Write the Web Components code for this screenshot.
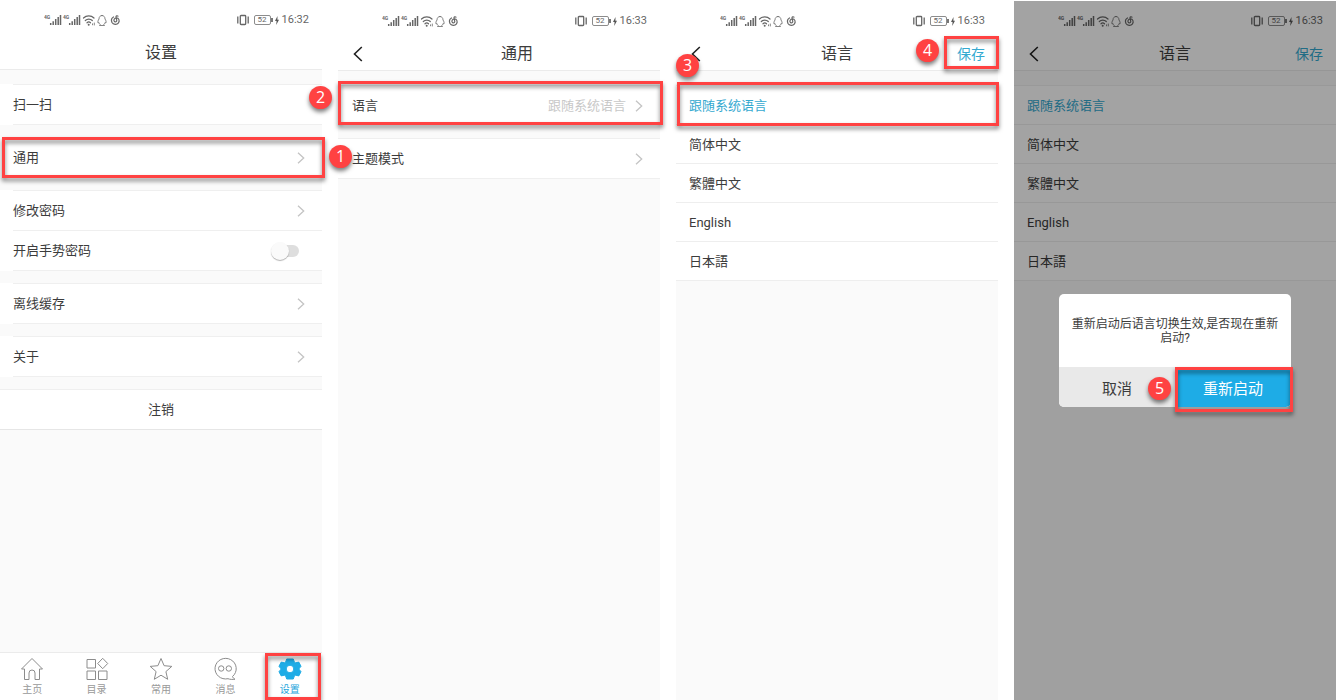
<!DOCTYPE html>
<html lang="zh-CN">
<head>
<meta charset="utf-8">
<title>语言设置步骤</title>
<style>
  body {
    margin: 0;
    background: #fff;
    color: #3c3c3c;
    font: 13px/20px Roboto, "Noto Sans CJK SC", sans-serif;
  }
</style>
</head>
<body>
<guide-board>
  <phone-screen>
    <status-bar slot="top">16:32</status-bar>
    <title-bar slot="top">设置</title-bar>
    <row-group inset><list-row>扫一扫</list-row></row-group>
    <row-group inset>
      <list-row arrow>通用</list-row>
      <mark-frame style="--inset: 0 -3px 0 2px"></mark-frame>
      <step-badge style="--x: 329px; --y: 8px">1</step-badge>
    </row-group>
    <row-group inset>
      <list-row arrow>修改密码</list-row>
      <switch-row>开启手势密码</switch-row>
    </row-group>
    <row-group inset><list-row arrow>离线缓存</list-row></row-group>
    <row-group inset><list-row arrow>关于</list-row></row-group>
    <row-group><list-row centered>注销</list-row></row-group>
    <tab-bar slot="bottom">
      <tab-item icon="home">主页</tab-item>
      <tab-item icon="grid">目录</tab-item>
      <tab-item icon="star">常用</tab-item>
      <tab-item icon="chat">消息</tab-item>
      <tab-item icon="gear" active>设置<mark-frame slot="mark" style="--inset: 0 1px 0 7px"></mark-frame></tab-item>
    </tab-bar>
  </phone-screen>

  <phone-screen lowered>
    <status-bar slot="top">16:33</status-bar>
    <title-bar slot="top" back>通用</title-bar>
    <row-group>
      <list-row arrow>语言<span slot="value">跟随系统语言</span></list-row>
      <mark-frame style="--inset: -4px -3px 1px 0"></mark-frame>
      <step-badge style="--x: -29px; --y: 1px">2</step-badge>
    </row-group>
    <row-group><list-row arrow>主题模式</list-row></row-group>
  </phone-screen>

  <phone-screen lowered>
    <status-bar slot="top">16:33</status-bar>
    <title-bar slot="top" back action="保存">语言
      <mark-frame slot="mark" style="--inset: -1px -1px 1px auto; --width: 55px"></mark-frame>
      <step-badge slot="mark" style="--x: 240px; --y: 2px">4</step-badge>
      <step-badge slot="mark" style="--x: 0px; --y: 17px">3</step-badge>
    </title-bar>
    <language-list>
      <mark-frame style="--inset: -4px -1px auto 1px; --height: 44px"></mark-frame>
    </language-list>
  </phone-screen>

  <phone-screen lowered>
    <status-bar slot="top">16:33</status-bar>
    <title-bar slot="top" back action="保存">语言</title-bar>
    <language-list></language-list>
    <confirm-dialog slot="overlay" cancel="取消" accept="重新启动">重新启动后语言切换生效,是否现在重新启动?
      <mark-frame slot="mark" style="--inset: 0 -2px -5px 0"></mark-frame>
      <step-badge slot="mark" style="--x: -27px; --y: 10px">5</step-badge>
    </confirm-dialog>
  </phone-screen>
</guide-board>

<script>
const chevron = '<svg class="chev" width="8" height="12" viewBox="0 0 8 12" fill="none" stroke="#c4c4c4" stroke-width="1.3" aria-hidden="true"><path d="M1 .7 6.7 6 1 11.3"/></svg>';

function define(name, render) {
  customElements.define(name, class extends HTMLElement {
    constructor() {
      super();
      this.attachShadow({ mode: 'open' });
    }
    connectedCallback() {
      const t = document.createElement('template');
      t.innerHTML = '<style>*{box-sizing:border-box}button,a,input{font:inherit;color:inherit}</style>' + render(this);
      this.shadowRoot.replaceChildren(t.content.cloneNode(true));
    }
  });
}

define('guide-board', () => `
  <style>
    :host { display: grid; grid-template-columns: repeat(4, minmax(0, 1fr)); gap: 16px; min-height: 100vh; }
  </style>
  <slot></slot>`);

define('phone-screen', () => `
  <style>
    :host { display: flex; flex-direction: column; position: relative; background: #fafafa; }
    :host([lowered]) { margin-top: 1px; }
    header { background: #fff; border-bottom: 1px solid #ebebeb; }
    main { flex: 1; display: flex; flex-direction: column; gap: 12px; padding-top: 14px; }
  </style>
  <header><slot name="top"></slot></header>
  <main><slot></slot></main>
  <slot name="bottom"></slot>
  <slot name="overlay"></slot>`);

const signal = x => `<g transform="translate(${x})"><text x="0" y="4.500" font-size="5" font-weight="700" font-family="Roboto, sans-serif">4G</text>
  <path d="M6.700 11v-2M9.200 11V7.200M11.700 11V5M14.200 11V3M16.500 11V1" stroke="#666" stroke-width="1.500"/></g>`;

define('status-bar', () => `
  <style>
    :host { display: flex; justify-content: space-between; align-items: center; height: 36px; padding: 4px 13px 0 44px; box-sizing: border-box; color: #666; font-size: 11px; }
    div { display: flex; align-items: center; gap: 2px; }
    .level { display: inline-block; border: 1px solid #8c8c8c; border-radius: 2px; width: 17px; height: 10px; font-size: 8px; line-height: 8px; text-align: center; }
    .cell { display: flex; align-items: center; margin-left: 2px; }
    .cell::after { content: ""; width: 2px; height: 4px; background: #777; }
    time { margin-left: 1px; }
  </style>
  <svg width="78" height="13" viewBox="0 0 78 13" fill="#666" aria-hidden="true">
    ${signal(0)}${signal(19)}
    <g fill="none" stroke="#666" stroke-width="1.2" stroke-linecap="round">
      <path d="M39.500 4a7.500 7.500 0 0 1 10.500 0M41.300 6.500a5 5 0 0 1 7 0M43 8.800a2.500 2.500 0 0 1 3.500 0"/>
      <path d="M48.500 9.800v1M50.300 9v2" stroke-width=".8"/>
      <path d="M58 1.500c-2 0-3 1.500-3 3.500C54 6.500 53.500 8 54.200 9L55 8.500c.2.9.6 1.500 1.200 2l-.7 1h5l-.7-1c.6-.5 1-1.100 1.200-2l.8.5c.7-1 .2-2.500-.8-4C61 3 60 1.500 58 1.500Z" stroke-width=".8"/>
      <path d="M69.500 3C67.700 4 67 6.200 68 8.400c1.200 2.400 5 2.500 6.500.4 1.400-2 .4-4.800-2-4.900-2.300 0-3.300 2.600-2 3.700 1.400 1 2.600-.3 2.200-1.600l-.7-3c-.2-1 1.200-1.600 2-.8" stroke-width="1.200"/>
    </g>
    <circle cx="44.700" cy="10.800" r="1"/>
  </svg>
  <div>
    <svg width="14" height="12" viewBox="0 0 14 12" fill="none" stroke="#666" stroke-width="1.300" aria-hidden="true"><rect x="4.300" y="1.500" width="5.400" height="9" rx=".8"/><path d="M1.800 2.500v7M12.200 2.500v7"/></svg>
    <span class="cell"><span class="level">52</span></span>
    <svg width="4" height="9" viewBox="0 0 4 9" fill="#555" aria-hidden="true"><path d="M2.500 0 0 5h1.600L1.200 9 4 3.800H2.400Z"/></svg>
    <time><slot></slot></time>
  </div>`);

/* Without an action the title centres in the space right of the back button. */
define('title-bar', el => `
  <style>
    :host { display: grid; grid-template-columns: 1fr; align-items: center; position: relative; height: 33px; box-sizing: border-box; }
    :host([back]) { grid-template-columns: 36px 1fr; }
    :host([action]) { grid-template-columns: 41px 1fr 41px; }
    h1 { margin: 0; font-size: 16px; line-height: 24px; font-weight: 400; text-align: center; }
    button { border: 0; background: none; padding: 0; white-space: nowrap; }
    .back { padding-left: 15px; display: flex; }
    .action { font-size: 14px; line-height: 20px; color: #34a9d0; text-align: left; }
  </style>
  ${el.hasAttribute('back') ? '<button class="back" aria-label="返回"><svg width="10" height="16" viewBox="0 0 10 16" fill="none" stroke="#222" stroke-width="1.600"><path d="M8.800 1 1.500 8l7.300 7"/></svg></button>' : ''}
  <h1><slot></slot></h1>
  ${el.hasAttribute('action') ? `<button class="action">${el.getAttribute('action')}</button>` : ''}
  <slot name="mark"></slot>`);

define('row-group', () => `
  <style>
    :host { display: block; position: relative; background: #fff; }
    .rows { border-top: 1px solid #efefef; }
    :host([inset]) .rows { margin-left: 13px; }
    :host([inset]) { --row-pad: 0; }
  </style>
  <div class="rows"><slot></slot></div>`);

define('list-row', el => `
  <style>
    :host { display: block; }
    button { display: flex; align-items: center; gap: 9px; width: 100%; height: 40px; border: 0; border-bottom: 1px solid #efefef; background: none; padding: 0 17px 0 var(--row-pad, 14px); text-align: left; }
    .name { flex: 1; }
    ::slotted([slot=value]) { color: #c8c8c8; }
    :host([centered]) .name { text-align: center; }
    :host([centered]) button { padding: 0 13px; border-color: #e6e6e6; }
  </style>
  <button><span class="name"><slot></slot></span><slot name="value"></slot>${el.hasAttribute('arrow') ? chevron : ''}</button>`);

define('switch-row', () => `
  <style>
    :host { display: block; }
    label { display: flex; align-items: center; justify-content: space-between; height: 40px; border-bottom: 1px solid #efefef; padding: 0 23px 0 var(--row-pad, 14px); }
    input { appearance: none; margin: 0; width: 28px; height: 18px; display: grid; align-items: center; }
    input::before, input::after { content: ""; grid-area: 1 / 1; }
    input::before { justify-self: end; width: 20px; height: 12px; border-radius: 6px; background: #dedede; }
    input::after { width: 18px; height: 18px; border-radius: 50%; background: #fafafa; box-shadow: 0 1px 1px rgba(0,0,0,.3); }
  </style>
  <label><slot></slot><input type="checkbox" role="switch"></label>`);

define('language-list', () => {
  const items = [['跟随系统语言', 'zh-CN'], ['简体中文', 'zh-CN'], ['繁體中文', 'zh-TW'], ['English', 'en'], ['日本語', 'ja']];
  return `
  <style>
    :host { display: block; position: relative; background: #fff; border-top: 1px solid #efefef; }
    label { display: flex; align-items: center; height: 39px; padding: 2px 13px 0; border-bottom: 1px solid #eeeeee; }
    input { appearance: none; margin: 0; width: 0; height: 0; }
    label:has(:checked) { color: #34a9d0; }
  </style>
  ${items.map(([text, lang], i) => `<label lang="${lang}"><input type="radio" name="language"${i ? '' : ' checked'}>${text}</label>`).join('')}
  <slot></slot>`;
});

define('tab-bar', () => `
  <style>
    :host { display: block; background: #fff; border-top: 1px solid #ebebeb; }
    nav { display: grid; grid-template-columns: repeat(5, minmax(0, 1fr)); }
  </style>
  <nav><slot></slot></nav>`);

const tabIcons = {
  home: '<path d="M1.500 12 12 1.500 22.500 12h-3v10.500h-4.500V16a3 3 0 0 0-6 0v6.500H4.500V12Z"/>',
  grid: '<path d="M2 2.500h8.500V11H2zM2 14h8.500v8.500H2zM13.500 14H22v8.500h-8.500zM17.700 1.300 22.700 6.500l-5 5.200-5-5.200Z"/>',
  star: '<path d="m12 1.500 3.100 7.200 7.700.7-5.900 5.200 1.800 7.700L12 18.200l-6.700 4.100 1.800-7.700L1.200 9.400l7.700-.7Z"/>',
  chat: '<path d="M19.500 19.500A10.600 10.300 0 1 0 15 21.700c2 .8 4.500.9 7 .5-1.200-.6-2.200-1.500-2.500-2.700Z"/><circle cx="8.200" cy="11.500" r="2.700"/><circle cx="15.800" cy="11.500" r="2.700"/>',
  gear: '<path fill="#1eace6" stroke="#1eace6" stroke-linejoin="round" fill-rule="evenodd" d="M8.700 2h6.600l1 3 1.300.8 3.200-.7 2.200 4.200-2.200 2.700 2.200 2.700-2.200 4.200-3.200-.7-1.300.8-1 3H8.700l-1-3-1.300-.8-3.200.7L1 14.700 3.200 12 1 9.300l2.200-4.200 3.200.7L7.700 5ZM12 8.200a3.800 3.800 0 1 0 0 7.600 3.800 3.800 0 0 0 0-7.600Z"/>'
};

define('tab-item', el => `
  <style>
    :host { display: block; position: relative; color: #999; }
    a { display: flex; flex-direction: column; align-items: center; gap: 2px; height: 47px; padding-top: 4px; text-decoration: none; font-size: 10px; line-height: 14px; }
    :host([active]) { color: #1ea6dc; }
  </style>
  <a href="#${el.getAttribute('icon')}"><svg width="24" height="24" viewBox="0 0 24 24" fill="none" stroke="#8c8c8c" aria-hidden="true">${tabIcons[el.getAttribute('icon')]}</svg><span><slot></slot></span></a>
  <slot name="mark"></slot>`);

define('confirm-dialog', el => `
  <style>
    :host { position: absolute; inset: 0; display: flex; align-items: center; justify-content: center; background: rgba(0,0,0,.36); }
    section { width: 72%; background: #fff; border-radius: 5px; }
    p { margin: 0; padding: 23px 10px 22px; font-size: 12px; line-height: 14px; text-align: center; }
    .buttons { display: grid; grid-template-columns: 1fr 1fr; }
    .cell { position: relative; }
    button { display: block; width: 100%; height: 40px; border: 0; background: #e9e9e9; padding: 3px 0 0; font-size: 15px; border-radius: 0 0 0 5px; }
    .accept { background: #1eace6; color: #fff; border-radius: 0 0 5px 0; }
  </style>
  <section role="dialog" aria-modal="true" aria-describedby="message">
    <p id="message"><slot></slot></p>
    <div class="buttons">
      <div class="cell"><button>${el.getAttribute('cancel')}</button></div>
      <div class="cell"><button class="accept">${el.getAttribute('accept')}</button><slot name="mark"></slot></div>
    </div>
  </section>`);

define('mark-frame', () => `
  <style>
    :host { position: absolute; z-index: 4; inset: var(--inset); width: var(--width, auto); height: var(--height, auto); box-sizing: border-box; border: 3px solid #ff4242; filter: drop-shadow(0 3px 2px rgba(0,0,0,.5)); pointer-events: none; }
  </style>`);

define('step-badge', () => `
  <style>
    :host { position: absolute; z-index: 5; left: var(--x); top: var(--y); width: 23px; height: 23px; border-radius: 50%; background: #ff4242; color: #fff; font: 16px/23px "Open Sans", sans-serif; text-align: center; box-shadow: 0 3px 4px rgba(0,0,0,.5); }
  </style>
  <slot></slot>`);
</script>
</body>
</html>
